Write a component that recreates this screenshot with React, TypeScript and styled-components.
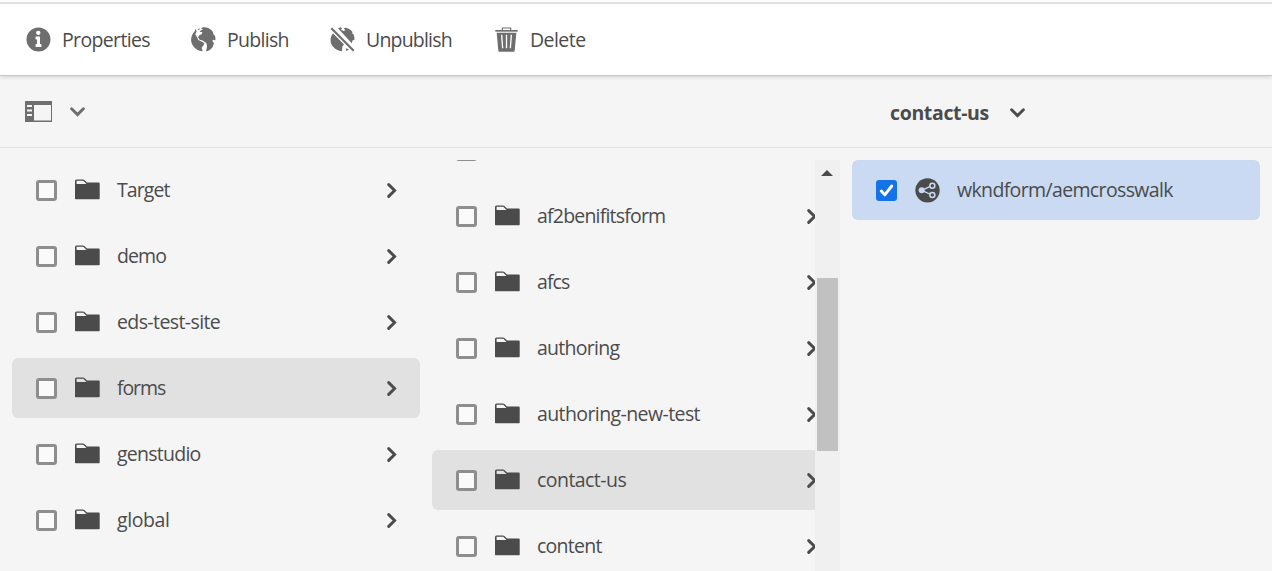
import React from 'react';
import styled, { createGlobalStyle } from 'styled-components';

const GlobalStyle = createGlobalStyle`
  *, *::before, *::after { box-sizing: border-box; }
  body {
    margin: 0;
    background: #f5f5f5;
    color: #4b4b4b;
    font-family: 'Open Sans', 'Noto Sans', sans-serif;
    font-size: 19.5px;
  }
`;

const Page = styled.div`
  display: flex;
  flex-direction: column;
  height: 571px;
  overflow: hidden;
`;

const ActionBar = styled.header`
  display: flex;
  flex: none;
  height: 76px;
  padding: 0 0 3px 25px;
  align-items: center;
  background: linear-gradient(#fcfcfc 2px, #e1e1e1 2px, #e1e1e1 4px, #fff 4px);
  border-bottom: 1px solid #c8c8c8;
  box-shadow: 0 1px 4px rgba(0, 0, 0, 0.15);
  z-index: 1;
`;

const Action = styled.button<{ $width: number }>`
  display: flex;
  flex: none;
  width: ${(p) => p.$width}px;
  align-items: center;
  padding: 7px 0 0;
  border: 0;
  background: none;
  color: #6e6e6e;
  font: inherit;
  text-align: left;
`;

const Label = styled.span<{ $track: number }>`
  flex: 1;
  color: #4b4b4b;
  line-height: 28px;
  white-space: nowrap;
  letter-spacing: ${(p) => p.$track}px;
`;

const ActionLabel = styled(Label)`
  margin-left: 10px;
`;

const Icon = styled.svg`
  display: block;
  flex: none;
  fill: currentColor;
`;

const SubHeader = styled.div`
  display: flex;
  flex: none;
  height: 72px;
  padding-left: 25px;
  align-items: center;
  border-bottom: 1px solid #e1e1e1;
`;

const RailToggle = styled.div`
  display: flex;
  flex: none;
  width: 865px;
  align-items: center;
  gap: 18px;
  color: #6e6e6e;
`;

const Title = styled.div`
  display: flex;
  align-items: center;
  gap: 21px;
  font-weight: 700;
  padding-top: 2px;
`;

const Columns = styled.main`
  display: flex;
  flex: 1;
  min-height: 0;
  padding: 12px 0 0;
`;

const Column = styled.section`
  display: flex;
  flex: none;
  width: 420px;
  padding-left: 12px;
  overflow: hidden;
`;

const Viewport = styled.div`
  flex: 1;
  min-width: 0;
  overflow: hidden;
`;

const List = styled.ul<{ $scroll?: number }>`
  display: flex;
  flex-direction: column;
  gap: 6px;
  width: 408px;
  padding: 0;
  margin: ${(p) => -(p.$scroll ?? 0)}px 0 0;
  list-style: none;
`;

const Row = styled.li<{ $tone?: 'active' | 'selected' }>`
  display: flex;
  flex: none;
  height: 60px;
  padding: 0 23px 0 24px;
  align-items: center;
  border-radius: 6px;
  background: ${(p) =>
    p.$tone === 'selected' ? '#c9daf2' : p.$tone === 'active' ? '#e1e1e1' : 'transparent'};
`;

const Checkbox = styled.span<{ $checked?: boolean }>`
  display: flex;
  flex: none;
  width: 21px;
  height: 21px;
  margin: 1px 18px 0 0;
  align-items: center;
  justify-content: center;
  border: ${(p) => (p.$checked ? '0' : '3px solid #8e8e8e')};
  border-radius: 3px;
  background: ${(p) => (p.$checked ? '#1473e6' : '#fafafa')};
`;

const IconSlot = styled.span`
  display: flex;
  flex: none;
  width: 42px;
`;

const ScrollTrack = styled.div`
  display: flex;
  flex: none;
  flex-direction: column;
  align-items: center;
  width: 25px;
  background: #f0f0f0;
`;

const ScrollArrow = styled.span`
  width: 0;
  height: 0;
  margin: 10px 1px 102px 0;
  border: 6px solid transparent;
  border-top: 0;
  border-bottom-color: #4b4b4b;
`;

const ScrollThumb = styled.span`
  width: 21px;
  height: 173px;
  background: #c1c1c1;
`;

const InfoIcon = () => (
  <Icon width="27" height="27" viewBox="0 0 36 36">
    <path d="M18 2a16 16 0 1 0 16 16A16 16 0 0 0 18 2zm-.3 4.3a2.718 2.718 0 0 1 2.864 2.824 2.665 2.665 0 0 1-2.864 2.863 2.705 2.705 0 0 1-2.864-2.864A2.717 2.717 0 0 1 17.7 6.3zM22 27a1 1 0 0 1-1 1h-6a1 1 0 0 1-1-1v-2a1 1 0 0 1 1-1h1v-6h-1a1 1 0 0 1-1-1v-2a1 1 0 0 1 1-1h4a1 1 0 0 1 1 1v9h1a1 1 0 0 1 1 1z" />
  </Icon>
);

const GlobeIcon = () => (
  <Icon width="27" height="27" viewBox="0 0 81 81">
    <path d="M13 17C2 29 0 46 9 59c7 10 17 16 29 17l-3-11 6-8 2-6-7-4-11-5-4-9-5-8 4-9-3-7z" />
    <path d="M33 6l8-2c13 0 22 5 28 14l1 7 5 4c1 5 2 9 1 14l-7-2-2 4 5 7-4 11c-4 6-9 10-15 12l-5 1 3-13-1-10-5-5-9-5-7-2-5-7 4-6 8-4 1-5-8-2 4-4 5-1-2-3z" />
    <path d="M23 10l6-3-1 6z" />
  </Icon>
);

const GlobeOffIcon = () => (
  <Icon width="27" height="27" viewBox="0 0 81 81">
    <path d="M12 22C3 33 2 49 11 61c7 9 17 14 28 15l1-14 5-7zM27 7l8-3 4 2-3 5 8 4 5-2-5-6 7-2c9 2 16 7 20 14l-3 3 5 2c3 6 4 12 3 18l-5 1-3 9zM52 66l8 5-9 4z" />
    <path d="M7 7l67 67" stroke="#fff" strokeWidth="13" />
    <path d="M7 7l67 67" stroke="currentColor" strokeWidth="6.5" />
  </Icon>
);

const TrashIcon = () => (
  <Icon width="27" height="27" viewBox="0 0 81 81">
    <path d="M28 12V6h25v6" fill="none" stroke="currentColor" strokeWidth="3.5" />
    <path d="M7 12h67v5H7z" />
    <path
      fillRule="evenodd"
      d="M11 20h59l-5 54q-.3 3-3 3H19q-3 0-3-3zM24 26l3 41h4l-3-41zM38.500 26v41h4V26zM53 26l-3 41h4l3-41z"
    />
  </Icon>
);

const RailIcon = () => (
  <Icon width="27" height="21" viewBox="0 0 27 21">
    <path fillRule="evenodd" d="M0 0h27v21H0zM9 4v15.500h17V4zM2 4v2h5V4zM2 8.500v2h5v-2zM2 13v2h5v-2z" />
  </Icon>
);

const ChevronDown = () => (
  <Icon width="15" height="10" viewBox="0 0 15 10">
    <path d="M1.600 1.700l5.900 5.900 5.900-5.900" fill="none" stroke="currentColor" strokeWidth="2.900" strokeLinecap="round" />
  </Icon>
);

const ChevronRight = () => (
  <Icon width="10" height="15" viewBox="0 0 10 15">
    <path d="M1.700 1.600l5.900 5.900-5.900 5.900" fill="none" stroke="currentColor" strokeWidth="2.900" strokeLinecap="round" />
  </Icon>
);

const FolderIcon = () => (
  <Icon width="25" height="22" viewBox="0 0 25 22">
    <path
      fillRule="evenodd"
      d="M0 2Q0 .5 1.500 .5H8q.8 0 1.400.6L12 3.500H23.800q.9 0 .9 1V19.600q0 .7-.7.7H.7q-.7 0-.7-.7zM1.600 1.700V5h9.900L8.300 1.700z"
    />
  </Icon>
);

const ShareIcon = () => (
  <Icon width="25" height="25" viewBox="0 0 75 75">
    <circle cx="37.500" cy="37" r="36.500" />
    <path d="M20 37l31-14M20 37l31 14" stroke="#c9daf2" strokeWidth="4" />
    <circle cx="20" cy="37" r="9" fill="#c9daf2" />
    <circle cx="52" cy="23" r="7.500" stroke="#c9daf2" strokeWidth="4.500" />
    <circle cx="52" cy="51" r="7.500" stroke="#c9daf2" strokeWidth="4.500" />
  </Icon>
);

const CheckMark = () => (
  <Icon width="15" height="13" viewBox="0 0 15 13">
    <path d="M2.300 7l3.500 3.900L12.700 2" fill="none" stroke="#fff" strokeWidth="2.900" strokeLinecap="round" strokeLinejoin="round" />
  </Icon>
);

type Item = { name: string; track: number; active?: boolean };

const rootItems: Item[] = [
  { name: 'Target', track: -0.9 },
  { name: 'demo', track: -0.9 },
  { name: 'eds-test-site', track: -0.6 },
  { name: 'forms', track: -1.1, active: true },
  { name: 'genstudio', track: -0.75 },
  { name: 'global', track: -0.4 },
];

const formItems: Item[] = [
  { name: '', track: 0 },
  { name: 'af2benifitsform', track: -0.8 },
  { name: 'afcs', track: -0.9 },
  { name: 'authoring', track: -0.72 },
  { name: 'authoring-new-test', track: -0.59 },
  { name: 'contact-us', track: -0.55, active: true },
  { name: 'content', track: -0.75 },
];

const FolderList = ({ items, scroll }: { items: Item[]; scroll?: number }) => (
  <List $scroll={scroll}>
    {items.map((item) => (
      <Row key={item.name} $tone={item.active ? 'active' : undefined}>
        <Checkbox />
        <IconSlot>
          <FolderIcon />
        </IconSlot>
        <Label $track={item.track}>{item.name}</Label>
        <ChevronRight />
      </Row>
    ))}
  </List>
);

export default function App() {
  return (
    <Page>
      <GlobalStyle />
      <ActionBar>
        <Action $width={165}>
          <InfoIcon />
          <ActionLabel $track={-0.65}>Properties</ActionLabel>
        </Action>
        <Action $width={139}>
          <GlobeIcon />
          <ActionLabel $track={-0.7}>Publish</ActionLabel>
        </Action>
        <Action $width={164}>
          <GlobeOffIcon />
          <ActionLabel $track={-0.8}>Unpublish</ActionLabel>
        </Action>
        <Action $width={94}>
          <TrashIcon />
          <ActionLabel $track={-0.55}>Delete</ActionLabel>
        </Action>
      </ActionBar>
      <SubHeader>
        <RailToggle>
          <RailIcon />
          <ChevronDown />
        </RailToggle>
        <Title>
          <Label $track={-0.35}>contact-us</Label>
          <ChevronDown />
        </Title>
      </SubHeader>
      <Columns>
        <Column>
          <FolderList items={rootItems} />
        </Column>
        <Column>
          <Viewport>
            <FolderList items={formItems} scroll={40} />
          </Viewport>
          <ScrollTrack>
            <ScrollArrow />
            <ScrollThumb />
          </ScrollTrack>
        </Column>
        <Column>
          <List>
            <Row $tone="selected">
              <Checkbox $checked>
                <CheckMark />
              </Checkbox>
              <IconSlot>
                <ShareIcon />
              </IconSlot>
              <Label $track={-0.64}>wkndform/aemcrosswalk</Label>
            </Row>
          </List>
        </Column>
      </Columns>
    </Page>
  );
}
